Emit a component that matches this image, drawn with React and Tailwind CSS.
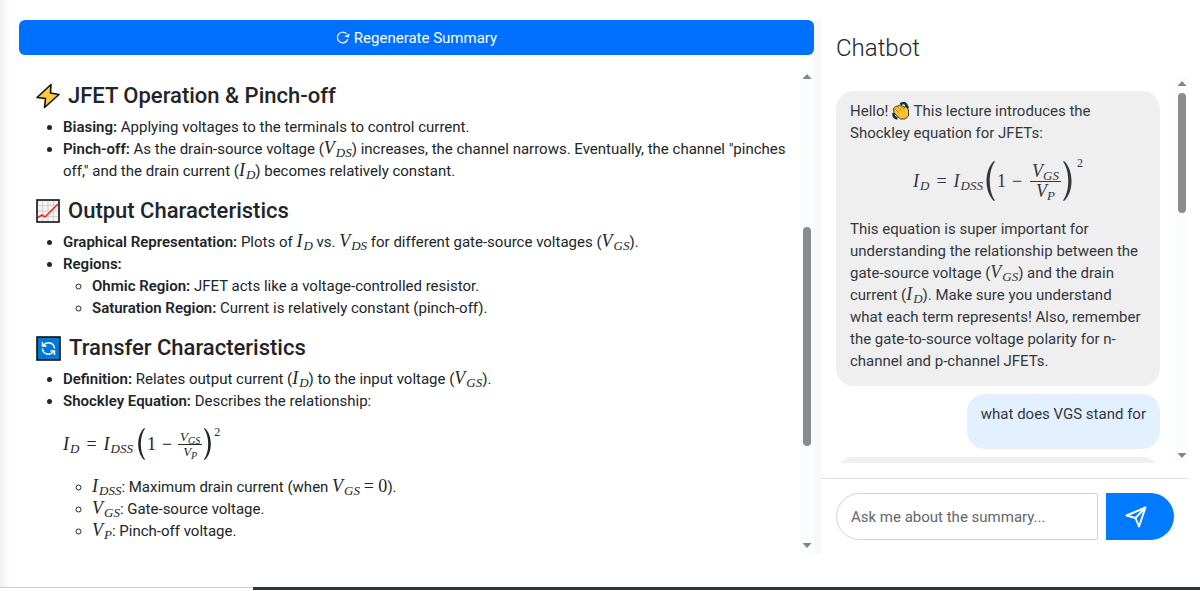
import { useState } from "react"

function Sym({ v, s }) {
  return (
    <span className="font-['Liberation_Serif',serif] text-[18px] leading-none">
      <i>{v}</i>
      <sub className="pl-px text-[13px] italic leading-none">{s}</sub>
    </span>
  )
}

function Paren({ flip, className }) {
  return (
    <svg viewBox="0 0 10 40" preserveAspectRatio="none" className={className} fill="currentColor">
      <path d={flip ? "M1 0C11 9 11 31 1 40L0 39.4C7 30 7 10 0 .6Z" : "M9 0C-1 9 -1 31 9 40L10 39.4C3 30 3 10 10 .6Z"} />
    </svg>
  )
}

function Shockley({ small }) {
  return (
    <div className="inline-flex items-center font-['Liberation_Serif',serif] text-[18px] leading-none">
      <Sym v="I" s="D" />
      <span className="mx-[7px]">=</span>
      <Sym v="I" s="DSS" />
      <Paren className={small ? "ml-1 w-2 h-8" : "ml-[2px] w-[10px] h-10"} />
      <span className="ml-[2px]">1</span>
      <span className="mx-[6px]">−</span>
      <span className={small ? "mr-[2px] flex flex-col items-center text-[13px] italic leading-none" : "mx-[2px] flex flex-col items-center text-[18px] italic leading-none"}>
        <span className="border-b border-current px-[2px] pb-px">V<sub className={small ? "text-[10px]" : "text-[13px]"}>GS</sub></span>
        <span>V<sub className={small ? "text-[10px]" : "text-[13px]"}>P</sub></span>
      </span>
      <Paren flip className={small ? "w-2 h-8" : "w-[10px] h-10"} />
      <sup className={small ? "self-start pt-1 pl-[2px] text-[12px] leading-none" : "self-start pt-[2px] pl-1 text-[12px] leading-none"}>2</sup>
    </div>
  )
}

function Scrollbar({ before, thumb }) {
  return (
    <div className="flex w-[14px] shrink-0 flex-col items-center bg-[#fbfcfd] py-1" aria-hidden="true">
      <svg viewBox="0 0 10 6" className="w-[10px] h-[6px] shrink-0"><path d="M5 0L9.5 5H.5Z" fill="#858585" /></svg>
      <div className={before} />
      <div className={`w-2 shrink-0 rounded-full bg-[#8b8b8b] ${thumb}`} />
      <div className="flex-1" />
      <svg viewBox="0 0 10 6" className="w-[10px] h-[6px] shrink-0"><path d="M5 5L9.5 0H.5Z" fill="#858585" /></svg>
    </div>
  )
}

function ReloadIcon() {
  return (
    <svg viewBox="0 0 14 14" className="h-[14px] w-[14px]" fill="none" stroke="currentColor" strokeWidth="1.2">
      <path d="M10.500 2.800A5.300 5.300 0 1 0 11.800 8" />
      <path d="M8.800 5.200L13.300 3 12.600 6.200Z" fill="currentColor" strokeWidth=".5" strokeLinejoin="round" />
    </svg>
  )
}

function SendIcon() {
  return (
    <svg viewBox="0 0 22 22" className="h-[22px] w-[22px]" fill="none" stroke="currentColor" strokeWidth="1.900" strokeLinejoin="round">
      <path d="M20.500 1.500L1.500 9.500 10.500 12 14 20.500Z" />
      <path d="M20.500 1.500L10.500 12" />
    </svg>
  )
}

function BoltIcon() {
  return (
    <svg viewBox="0 0 24 26" className="w-6 h-[26px]">
      <path d="M15 1.500L1 14.500l8.500 1L8.500 24.500 23 11.500l-8.500-1.500Z" fill="#ffc83d" stroke="#111" strokeWidth="1.600" strokeLinejoin="round" />
    </svg>
  )
}

function ChartIcon() {
  return (
    <svg viewBox="0 0 24 24" className="w-6 h-6">
      <rect x="1" y="1" width="22" height="22" fill="#f4f4f4" stroke="#111" strokeWidth="1.600" />
      <path d="M6.500 2v20M12 2v20M17.500 2v20M2 6.500h20M2 12h20M2 17.500h20" stroke="#d2d2d2" />
      <path d="M2 18.500l4-2.500 3 2L22 5" fill="none" stroke="#ee2b1b" strokeWidth="1.600" />
    </svg>
  )
}

function CycleIcon() {
  return (
    <svg viewBox="0 0 25 25" className="w-[25px] h-[25px]">
      <rect x="1" y="1" width="23" height="23" fill="#0078d7" stroke="#111" strokeWidth="1.600" />
      <g fill="none" stroke="#fff" strokeWidth="1.400">
        <path d="M7.500 9.500A6 6 0 0 1 18.500 12.500M17.500 15.500A6 6 0 0 1 6.500 12.500" />
        <path d="M6.500 6v4h4M18.500 19v-4h-4" />
      </g>
    </svg>
  )
}

function HandIcon() {
  return (
    <svg viewBox="0 0 18 18" className="inline-block w-[18px] h-[18px] align-[-4px]">
      <path d="M8.500 2.500Q12-.5 14 2.500L16 6.500M1.500 11Q1 15.500 5.500 16.500" fill="none" stroke="#16343c" strokeWidth="2.600" />
      <path d="M1.500 6.500L4 4.500 8.500 3 13 5.500l.5-2L16.500 8v6L13 17H8.500L2 11Z" fill="#ffc22e" stroke="#111" strokeWidth=".8" strokeLinejoin="round" />
      <path d="M3 7l4.500 4M5.500 5l4.500 4M8.500 4l3.500 3.500" stroke="#8a6914" strokeWidth=".7" />
    </svg>
  )
}

function Heading({ icon, children }) {
  return (
    <h2 className="mb-[6px] flex h-7 items-center gap-2 text-[22px] font-medium leading-7">
      {icon}
      {children}
    </h2>
  )
}

function Term({ children }) {
  return <b className="font-semibold">{children}</b>
}

export default function App() {
  const [message, setMessage] = useState("")

  return (
    <div className="flex min-h-screen flex-col bg-white font-[Roboto,sans-serif] text-[15px] leading-[22px] text-[#212529]">
      <div className="flex flex-1">
        <div className="w-[10px] shrink-0 bg-linear-to-r from-[#f0f0f0] to-white" />

        <main className="flex flex-1 pt-5 pr-[11px] pb-[33px] pl-[9px]">

          {/* Summary */}
          <section className="flex min-w-0 flex-1 flex-col border-r-[7px] border-[#f8f9fc]">
            <button className="flex h-[35px] items-center justify-center gap-1 rounded-md bg-[#0070ff] text-white">
              <ReloadIcon />
              Regenerate Summary
            </button>

            <div className="mt-[15px] mb-px flex flex-1">
              <div className="flex-1 pt-3 pl-[17px]">
                <Heading icon={<BoltIcon />}>JFET Operation &amp; Pinch-off</Heading>
                <ul className="mb-[15px] list-disc pl-[27px]">
                  <li><Term>Biasing:</Term> Applying voltages to the terminals to control current.</li>
                  <li>
                    <Term>Pinch-off:</Term> As the drain-source voltage (<Sym v="V" s="DS" />) increases, the channel narrows. Eventually, the channel "pinches off," and the drain current (<Sym v="I" s="D" />) becomes relatively constant.
                  </li>
                </ul>

                <Heading icon={<ChartIcon />}>Output Characteristics</Heading>
                <ul className="mb-[15px] list-disc pl-[27px]">
                  <li><Term>Graphical Representation:</Term> Plots of <Sym v="I" s="D" /> vs. <Sym v="V" s="DS" /> for different gate-source voltages (<Sym v="V" s="GS" />).</li>
                  <li>
                    <Term>Regions:</Term>
                    <ul className="list-[circle] pl-[29px]">
                      <li><Term>Ohmic Region:</Term> JFET acts like a voltage-controlled resistor.</li>
                      <li><Term>Saturation Region:</Term> Current is relatively constant (pinch-off).</li>
                    </ul>
                  </li>
                </ul>

                <Heading icon={<CycleIcon />}>Transfer Characteristics</Heading>
                <ul className="list-disc pl-[27px]">
                  <li><Term>Definition:</Term> Relates output current (<Sym v="I" s="D" />) to the input voltage (<Sym v="V" s="GS" />).</li>
                  <li>
                    <Term>Shockley Equation:</Term> Describes the relationship:
                    <div className="my-3 flex h-10 items-center"><Shockley small /></div>
                    <ul className="list-[circle] pl-[29px]">
                      <li><Sym v="I" s="DSS" />: Maximum drain current (when <Sym v="V" s="GS" /> <span className="font-['Liberation_Serif',serif] text-[18px] leading-none">= 0</span>).</li>
                      <li><Sym v="V" s="GS" />: Gate-source voltage.</li>
                      <li><Sym v="V" s="P" />: Pinch-off voltage.</li>
                    </ul>
                  </li>
                </ul>
              </div>
              <Scrollbar before="h-[147px] shrink-0" thumb="h-[219px]" />
            </div>
          </section>

          {/* Chatbot */}
          <aside className="flex w-[368px] shrink-0 flex-col">
            <h3 className="mt-3 pl-[15px] text-2xl font-light">Chatbot</h3>
            <div className="mt-[13px] flex h-[386px]">
              <div className="flex flex-1 flex-col gap-2 overflow-hidden pt-[14px] pr-[15px] pl-[15px]">
                <div className="shrink-0 rounded-[18px] bg-[#efefef] px-[14px] pt-[9px] pb-[14px] text-[#33373b]">
                  <p>Hello! <HandIcon /> This lecture introduces the Shockley equation for JFETs:</p>
                  <div className="my-3 flex h-[50px] items-center justify-center"><Shockley /></div>
                  <p>This equation is super important for understanding the relationship between the gate-source voltage (<Sym v="V" s="GS" />) and the drain current (<Sym v="I" s="D" />). Make sure you understand what each term represents! Also, remember the gate-to-source voltage polarity for n-channel and p-channel JFETs.</p>
                </div>
                <div className="h-[55px] shrink-0 self-end rounded-[18px] bg-[#e3f0ff] px-[14px] pt-[9px] text-[#33373b]">what does VGS stand for</div>
                <div className="h-12 shrink-0 rounded-[18px] bg-[#efefef]" />
              </div>
              <Scrollbar before="h-[6px] shrink-0" thumb="h-[120px]" />
            </div>

            <form className="mt-[15px] flex gap-2 border-t border-[#dee2e6] py-[14px] pr-[15px] pl-[15px]" onSubmit={(e) => e.preventDefault()}>
              <input
                aria-label="Message"
                value={message}
                onChange={(e) => setMessage(e.target.value)}
                placeholder="Ask me about the summary..."
                className="h-[47px] min-w-0 flex-1 rounded-l-full border border-[#ced4da] px-[14px] placeholder:text-[#62676c]"
              />
              <button aria-label="Send" className="flex h-[47px] w-[68px] items-center justify-center rounded-r-full bg-[#007bff] pr-2 text-white">
                <SendIcon />
              </button>
            </form>
          </aside>
        </main>
      </div>

      <footer className="flex h-1 shrink-0">
        <div className="w-[253px] border-t border-[#c8cccb]" />
        <div className="h-[3px] flex-1 bg-[#2b3a3a]" />
      </footer>
    </div>
  )
}
